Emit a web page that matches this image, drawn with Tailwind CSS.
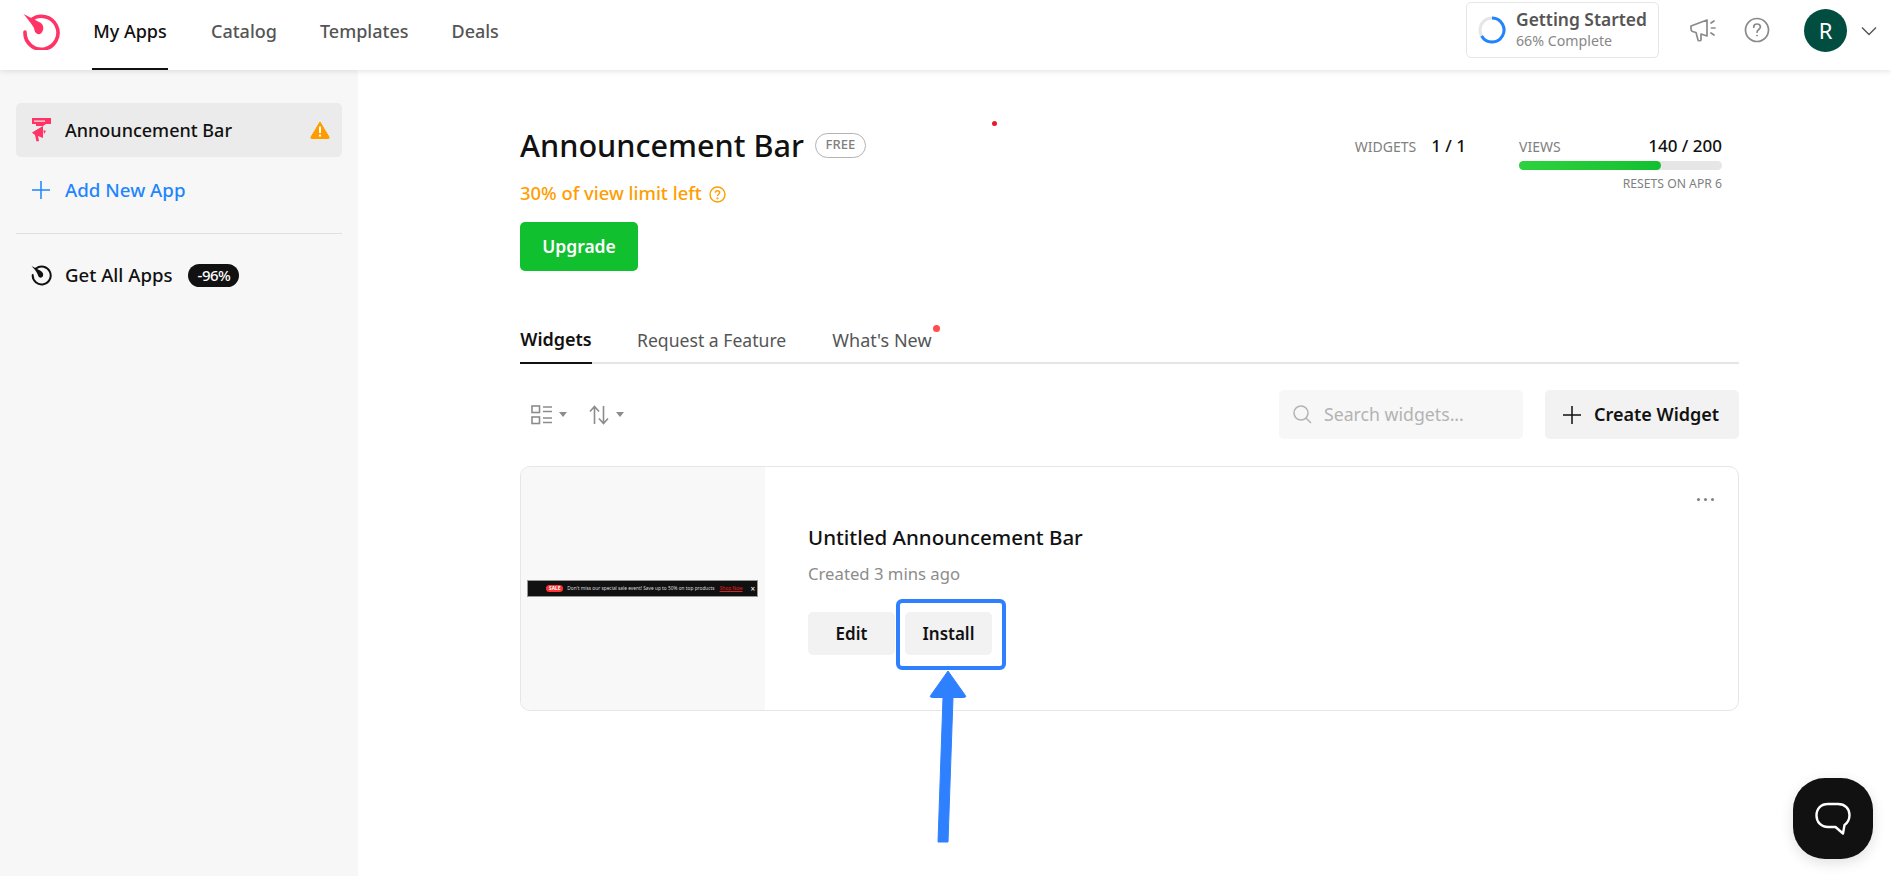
<!DOCTYPE html>
<html lang="en">
<head>
    <meta charset="UTF-8">
    <title>Announcement Bar</title>
    <script src="https://cdn.jsdelivr.net/npm/@tailwindcss/browser@4"></script>
</head>
<body class="bg-white font-['Noto_Sans',sans-serif] text-[#111111]">
<div class="relative h-[876px] w-[1891px] overflow-hidden">

    <!-- top bar -->
    <header class="relative z-10 flex h-[70px] items-center bg-white pl-[22px] pr-[14px] shadow-[0_1px_6px_rgba(0,0,0,0.12)]">
        <svg class="mb-[8px] h-[38px] w-[38px] shrink-0" viewBox="0 0 38 38" fill="none">
            <path d="M9 8 A16.5 16.5 0 1 1 3 20" stroke="#ff3366" stroke-width="3.6" stroke-linecap="round"/>
            <path d="M1.5 2 L18 10.5 C20.5 12 22 14.5 21 18 C20 21 18 23 15.5 22 C13 21 12.5 19 12 16 C9 11 5 6 1.5 2 Z" fill="#ff3366"/>
        </svg>
        <nav class="ml-[32px] flex h-full items-center gap-[43px] text-[18px] text-[#555555]">
            <a class="flex h-full w-[76px] items-center justify-center border-b-2 border-[#111111] pb-[6px] font-medium whitespace-nowrap text-[#111111]">My Apps</a>
            <a class="pb-[8px] font-medium">Catalog</a>
            <a class="pb-[8px] font-medium">Templates</a>
            <a class="pb-[8px] font-medium">Deals</a>
        </nav>

        <div class="mb-[10px] ml-auto flex h-[56px] w-[193px] items-center gap-[10px] rounded-[5px] border border-[#e6e6e6] pl-[11px]">
            <svg class="h-[28px] w-[28px] shrink-0" viewBox="0 0 28 28" fill="none">
                <circle cx="14" cy="14" r="12" stroke="#e6e6e6" stroke-width="3"/>
                <path d="M14 2 A12 12 0 1 1 3.6 20" stroke="#1f85ff" stroke-width="3"/>
            </svg>
            <div class="flex flex-col pb-[2px]">
                <span class="text-[17.4px] leading-[24px] font-semibold text-[#555555]">Getting Started</span>
                <span class="text-[14.2px] leading-[20px] text-[#888888]">66% Complete</span>
            </div>
        </div>
        <svg class="mb-[10px] ml-[30px] h-[28px] w-[28px]" viewBox="0 0 28 28" fill="none" stroke="#8a8a8a" stroke-width="1.7" stroke-linejoin="round" stroke-linecap="round">
            <path d="M2 10 L18 4 L18 20 L12 18 L12 24 C12 25 9 25 9 24 L7 16.5 L3.5 15.5 C2.5 15 2 14 2 13 Z"/>
            <path d="M22 7 L25 5 M22.5 12 L26 12 M22 17 L25 19"/>
        </svg>
        <svg class="mb-[10px] ml-[27px] h-[26px] w-[26px]" viewBox="0 0 26 26" fill="none" stroke="#8a8a8a" stroke-width="1.7">
            <circle cx="13" cy="13" r="11.5"/>
            <path d="M9.7 10.2 C9.7 8 11.2 7 13 7 C15 7 16.4 8.2 16.4 10 C16.4 12.4 13 12.6 13 15.2" stroke-linecap="round"/>
            <circle cx="13" cy="18.6" r="0.5" fill="#8a8a8a" stroke-width="1"/>
        </svg>
        <div class="mb-[10px] ml-[34px] flex h-[43px] w-[43px] items-center justify-center rounded-full bg-[#014d3f] text-[22px] text-white">R</div>
        <svg class="mb-[8px] ml-[14px] h-[16px] w-[16px]" viewBox="0 0 16 16" fill="none" stroke="#555555" stroke-width="1.4">
            <path d="M1 4.5 L8 11.5 L15 4.5"/>
        </svg>
    </header>

    <div class="flex h-[806px]">
        <!-- sidebar -->
        <aside class="flex w-[358px] shrink-0 flex-col bg-[#f7f7f7] px-[16px] pt-[33px]">
            <div class="flex h-[54px] items-center rounded-[5px] bg-[#ebebeb] pl-[15px] pr-[12px]">
                <svg class="h-[24px] w-[20px] shrink-0" viewBox="0 0 20 24" fill="#ff3366">
                    <path fill-rule="evenodd" d="M1 0 H20 V6 H15 L12 8 H5 V6 H1 Z M3 2.5 V3.8 H14 V2.5 Z"/>
                    <path d="M12 8 L12 20 L7 18 L8 23 L5.5 23.5 L4 17 L1 14.5 Z"/>
                    <path d="M12.5 12 L15 13 L13 16 Z"/>
                </svg>
                <span class="ml-[14px] text-[18px] font-medium">Announcement Bar</span>
                <svg class="ml-auto h-[18px] w-[20px]" viewBox="0 0 20 18">
                    <path d="M10 1 L19 16 C19.4 17 19 17.5 18 17.5 H2 C1 17.5 0.6 17 1 16 Z" fill="#ff9d00" stroke="#ff9d00" stroke-linejoin="round"/>
                    <rect x="9" y="5.5" width="2" height="6.5" fill="#fff"/>
                    <rect x="9" y="13.5" width="2" height="2" fill="#fff"/>
                </svg>
            </div>
            <div class="mt-[6px] flex h-[54px] items-center pl-[15px] text-[#1f85ff]">
                <svg class="h-[20px] w-[20px] shrink-0" viewBox="0 0 20 20" stroke="#1f85ff" stroke-width="1.5"><path d="M10 1 V19 M1 10 H19"/></svg>
                <span class="ml-[14px] text-[18.7px] font-medium">Add New App</span>
            </div>
            <div class="mt-[16px] border-t border-[#e0e0e0]"></div>
            <div class="mt-[20px] flex h-[42px] items-center pl-[15px]">
                <svg class="h-[21px] w-[21px] shrink-0" viewBox="0 0 21 21" fill="none">
                    <path d="M5 3.5 A9 9 0 1 1 1.7 10" stroke="#111" stroke-width="2" stroke-linecap="round"/>
                    <path d="M0.5 1 L10 6 C12 7.5 12.5 9 12 11 C11 13 9 13 8 12 C7 11 7 10 6.5 9 C5 6 3 3.5 0.5 1 Z" fill="#111"/>
                </svg>
                <span class="ml-[13px] text-[18.6px] font-medium">Get All Apps</span>
                <span class="ml-[16px] flex h-[23px] w-[51px] items-center justify-center rounded-full bg-[#111111] text-[15px] font-medium tracking-[-0.5px] text-white">-96%</span>
            </div>
        </aside>

        <!-- main column -->
        <main class="ml-[162px] w-[1219px] shrink-0">
            <div class="flex h-[152px] items-start justify-between pt-[53px]">
                <div>
                    <div class="flex items-center">
                        <h1 class="text-[30.6px] leading-[44px] font-medium">Announcement Bar</h1>
                        <span class="ml-[11px] flex h-[25px] w-[51px] items-center justify-center rounded-full border border-[#b3b3b3] text-[13px] font-medium text-[#808080]">FREE</span>
                    </div>
                    <div class="mt-[14px] flex items-center text-[18.4px] leading-[24px] font-medium text-[#ff9d00]">
                        30% of view limit left
                        <svg class="ml-[7px] mt-[3px] h-[17px] w-[17px]" viewBox="0 0 17 17" fill="none" stroke="#ff9d00" stroke-width="1.4">
                            <circle cx="8.5" cy="8.5" r="7.5"/>
                            <path d="M6.3 6.8 C6.3 5.4 7.3 4.7 8.5 4.7 C9.8 4.7 10.7 5.5 10.7 6.6 C10.7 8.2 8.5 8.2 8.5 10"/>
                            <circle cx="8.5" cy="12.3" r="0.4"/>
                        </svg>
                    </div>
                </div>
                <div class="mr-[17px] flex pt-[11px] text-[14px]">
                    <div class="flex h-[24px] items-center">
                        <span class="text-[#808080]">WIDGETS</span>
                        <span class="ml-[15px] text-[17px] font-medium">1 / 1</span>
                    </div>
                    <div class="ml-[53px] w-[203px]">
                        <div class="flex h-[24px] items-center justify-between">
                            <span class="text-[#808080]">VIEWS</span>
                            <span class="text-[17px] font-medium">140 / 200</span>
                        </div>
                        <div class="mt-[3px] h-[9px] rounded-full bg-[#e6e6e6]">
                            <div class="h-full rounded-full bg-gradient-to-r from-[#2ed23f] to-[#11c02f]" style="width: 70%"></div>
                        </div>
                        <div class="mt-[6px] text-right text-[12.2px] leading-[16px] text-[#808080]">RESETS ON APR 6</div>
                    </div>
                </div>
            </div>
            <button class="h-[49px] w-[118px] rounded-[5px] bg-[#11c02f] text-[17.5px] font-semibold text-white">Upgrade</button>

            <!-- tabs -->
            <div class="mt-[40px] flex h-[53px] items-end border-b-2 border-[#e6e6e6] text-[17.6px] text-[#555555]">
                <a class="-mb-[2px] flex h-[53px] w-[72px] items-center justify-center border-b-2 border-[#111111] pt-[5px] text-[18px] font-semibold text-[#111111]">Widgets</a>
                <a class="ml-[45px] flex h-[51px] items-center pt-[7px]">Request a Feature</a>
                <a class="relative ml-[46px] flex h-[51px] items-center pt-[7px] text-[18px]">What's New
                    <span class="absolute -right-[8px] top-[14px] h-[7px] w-[7px] rounded-full bg-[#ff4d4d]"></span>
                </a>
            </div>

            <!-- toolbar -->
            <div class="mt-[26px] flex h-[49px] items-center">
                <svg class="ml-[11px] h-[20px] w-[21px]" viewBox="0 0 21 20" fill="none" stroke="#8c8c8c" stroke-width="1.6">
                    <rect x="1" y="1" width="7.5" height="6.5"/>
                    <rect x="1" y="12" width="7.5" height="6.5"/>
                    <path d="M12 2 H21 M12 6.5 H21 M12 13 H21 M12 17.5 H21"/>
                </svg>
                <svg class="ml-[7px] h-[5px] w-[8px]" viewBox="0 0 8 5" fill="#8c8c8c"><path d="M0 0 H8 L4 5 Z"/></svg>
                <svg class="ml-[22px] h-[20px] w-[20px]" viewBox="0 0 20 20" fill="none" stroke="#8c8c8c" stroke-width="1.6">
                    <path d="M5.5 19 V2 M1 6.5 L5.5 1.5 L10 6.5 M14.5 1 V18 M10 13.5 L14.5 18.5 L19 13.5"/>
                </svg>
                <svg class="ml-[7px] h-[5px] w-[8px]" viewBox="0 0 8 5" fill="#8c8c8c"><path d="M0 0 H8 L4 5 Z"/></svg>
                <div class="ml-auto flex h-[49px] w-[244px] items-center rounded-[5px] bg-[#f7f7f7] pl-[14px]">
                    <svg class="h-[19px] w-[19px]" viewBox="0 0 19 19" fill="none" stroke="#b3b3b3" stroke-width="1.5">
                        <circle cx="8" cy="8" r="7"/><path d="M13 13 L18 18"/>
                    </svg>
                    <span class="ml-[12px] text-[17.7px] text-[#b3b3b3]">Search widgets...</span>
                </div>
                <button class="ml-[22px] flex h-[49px] w-[194px] items-center rounded-[5px] bg-[#f2f2f2] pl-[18px] text-[18px] font-semibold">
                    <svg class="h-[18px] w-[18px]" viewBox="0 0 18 18" stroke="#111" stroke-width="1.5"><path d="M9 0 V18 M0 9 H18"/></svg>
                    <span class="ml-[13px]">Create Widget</span>
                </button>
            </div>

            <!-- widget card -->
            <div class="relative mt-[27px] flex h-[245px] overflow-hidden rounded-[10px] border border-[#e6e6e6]">
                <div class="flex w-[244px] shrink-0 items-center bg-[#f8f8f8] pl-[7px] pr-[8px]">
                    <div class="flex h-[15px] w-full items-center bg-[#111111] pl-[18px] text-[4.8px] whitespace-nowrap text-[#dddddd] outline outline-[#555555]/60">
                        <span class="rounded-full bg-[#ff3333] px-[3px] font-bold text-white">SALE</span>
                        <span class="ml-[4px]">Don't miss our special sale event! Save up to 50% on top products</span>
                        <span class="ml-[5px] text-[#e02020] underline">Shop Now</span>
                        <span class="ml-[8px] text-[8px] leading-none text-white">×</span>
                    </div>
                </div>
                <div class="pl-[43px] pt-[54px]">
                    <h2 class="text-[20.5px] leading-[32px] font-medium">Untitled Announcement Bar</h2>
                    <p class="mt-[9px] text-[16.7px] leading-[24px] text-[#8c8c8c]">Created 3 mins ago</p>
                    <div class="mt-[26px] flex gap-[10px] text-[17px] font-semibold">
                        <button class="h-[43px] w-[87px] rounded-[5px] bg-[#f2f2f2]">Edit</button>
                        <button class="h-[43px] w-[87px] rounded-[5px] bg-[#f2f2f2]">Install</button>
                    </div>
                </div>
                <div class="absolute right-[24px] top-[31px] flex gap-[4px]">
                    <span class="h-[3px] w-[3px] rounded-full bg-[#808080]"></span>
                    <span class="h-[3px] w-[3px] rounded-full bg-[#808080]"></span>
                    <span class="h-[3px] w-[3px] rounded-full bg-[#808080]"></span>
                </div>
            </div>
        </main>
    </div>

    <!-- stray dot -->
    <span class="absolute left-[992px] top-[121px] h-[5px] w-[5px] rounded-full bg-[#e8192c]"></span>

    <!-- annotation over the Install button -->
    <div class="absolute left-[896px] top-[599px] h-[71px] w-[110px] rounded-[6px] border-[4px] border-[#2f80ff]"></div>
    <svg class="absolute left-[925px] top-[668px] h-[180px] w-[46px]" viewBox="0 0 46 180" fill="#2f80ff">
        <path d="M23 3 L40 27 C41.5 29 40.5 29.5 38 29.5 L28 29.5 L23 174 L13 174 L18 29.5 L8 29.5 C5.5 29.5 4.5 29 6 27 Z" stroke="#2f80ff" stroke-linejoin="round"/>
    </svg>

    <!-- chat launcher -->
    <div class="absolute left-[1793px] top-[778px] flex h-[81px] w-[80px] items-center justify-center rounded-[32px] bg-[#111111] shadow-[0_4px_14px_rgba(0,0,0,0.12)]">
        <svg class="h-[34px] w-[36px]" viewBox="0 0 36 34" fill="none" stroke="#fff" stroke-width="2.4" stroke-linejoin="round">
            <path d="M13 2 H23 C30 2 34.5 6.5 34.5 13 C34.5 18 32.5 21 29.5 23 L28 31.5 L20.5 25 H13 C6 25 1.5 20 1.5 13.5 C1.5 6.5 6 2 13 2 Z"/>
        </svg>
    </div>
</div>
</body>
</html>
